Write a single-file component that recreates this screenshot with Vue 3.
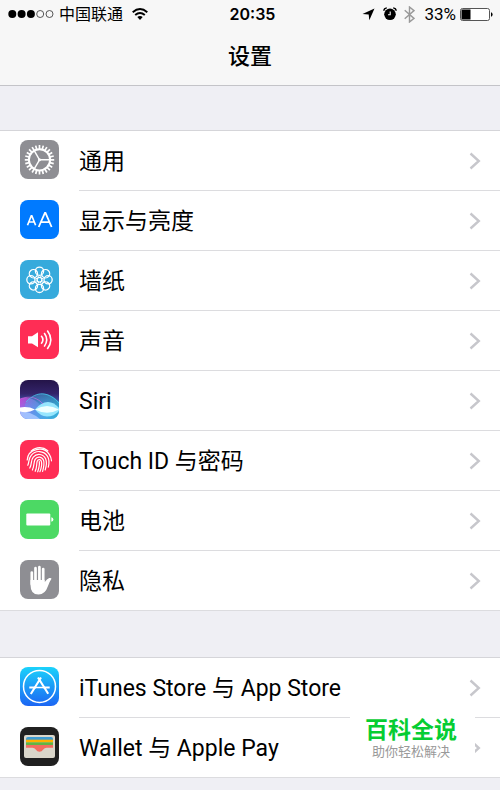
<template>
  <div class="phone">
    <header class="header">
      <div class="status">
        <div class="status-left">
          <svg class="signal" width="46" height="10" viewBox="0 0 46 10">
            <circle
              v-for="n in 5"
              :key="n"
              :cx="n * 9.3 - 5"
              cy="5"
              :r="n < 4 ? 4 : 3.5"
              :fill="n < 4 ? '#000' : 'none'"
              :stroke="n < 4 ? 'none' : '#444'"
              stroke-width="0.9"
            />
          </svg>
          <span class="carrier">中国联通</span>
          <svg width="16" height="12" viewBox="0 0 16 12" fill="none" stroke="#000">
            <path d="M0.7 4.2Q8 -2 15.3 4.2" stroke-width="1.9" />
            <path d="M3.2 7Q8 2.8 12.8 7" stroke-width="1.9" />
            <path d="M5.3 9.1Q8 6.7 10.7 9.1L8 12Z" fill="#000" stroke="none" />
          </svg>
        </div>
        <span class="time">20:35</span>
        <div class="status-right">
          <svg class="arrow" width="13" height="13" viewBox="0 0 13 13">
            <path d="M12.5 0.5L7.3 12.3L6.7 6.5L0.5 6.1Z" />
          </svg>
          <svg class="alarm" width="14" height="14" viewBox="0 0 14 14">
            <circle cx="7" cy="7.3" r="5.8" />
            <path d="M0.8 3.8Q1 1.3 3.8 0.9M13.2 3.8Q13 1.3 10.2 0.9" fill="none" stroke="#000" stroke-width="1.4" />
            <path d="M7.2 4.5V7.7H5" fill="none" stroke="#f7f7f7" stroke-width="1.1" />
          </svg>
          <svg class="bluetooth" width="11" height="17" viewBox="0 0 11 17" fill="none" stroke="#999" stroke-width="1.4">
            <path d="M0.7 4.3L10 12.4L5.5 16V1L10 4.6L0.7 12.7" />
          </svg>
          <span class="percent">33%</span>
          <svg width="33" height="13" viewBox="0 0 33 13">
            <rect x="0.5" y="0.5" width="29" height="12" rx="2" fill="#fff" stroke="#555" />
            <path d="M2 1.5H10.5V11.5H2Q1.5 11.5 1.5 11V2Q1.5 1.5 2 1.5Z" />
            <path d="M31 4.2Q32.6 4.6 32.6 6.5T31 8.8Z" />
          </svg>
        </div>
      </div>
      <h1 class="title">设置</h1>
    </header>

    <main class="content">
      <nav v-for="(group, index) in groups" :key="index" class="group">
        <a v-for="item in group" :key="item.icon" class="row" href="#">
          <svg class="icon" :class="item.icon" viewBox="0 0 39 39" fill="none" stroke="#fff">
            <template v-if="item.icon === 'general'">
              <circle cx="19.5" cy="19.8" r="10.6" stroke-width="2" />
              <path
                v-for="n in 24"
                :key="n"
                d="M19.5 5.1V9"
                stroke-width="1.7"
                :transform="`rotate(${n * 15} 19.5 19.8)`"
              />
              <path
                v-for="n in 3"
                :key="'s' + n"
                d="M19.5 19.8H30"
                stroke-width="1.4"
                :transform="`rotate(${n * 120} 19.5 19.8)`"
              />
              <circle cx="19.5" cy="19.8" r="1.5" fill="#fff" stroke="none" />
            </template>

            <template v-else-if="item.icon === 'display'">
              <path d="M7.5 25.2L11.3 15.8H11.8L15.6 25.2M8.8 22H14.3" stroke-width="1.7" />
              <path d="M18.7 27L24.9 12.8H25.5L31.6 27M20.8 22.2H29.6" stroke-width="1.8" />
            </template>

            <template v-else-if="item.icon === 'wallpaper'">
              <circle
                v-for="n in 8"
                :key="n"
                cx="19.5"
                cy="11.2"
                r="4.1"
                stroke-width="1.3"
                :transform="`rotate(${n * 45} 19.5 19.8)`"
              />
              <path
                v-for="n in 8"
                :key="'p' + n"
                d="M19.5 17.6V15.6"
                stroke-width="1"
                :transform="`rotate(${n * 45 + 22.5} 19.5 19.8)`"
              />
              <circle cx="19.5" cy="19.8" r="2.4" stroke-width="1.2" />
            </template>

            <template v-else-if="item.icon === 'sound'">
              <path d="M8 16.2H12L18 12.3V27.2L12 23.6H8Z" fill="#fff" stroke="none" />
              <path d="M21.2 15.8Q24.6 19.8 21.2 23.8" stroke-width="1.6" />
              <path d="M24.2 13Q29.2 19.8 24.2 26.6" stroke-width="1.6" />
              <path d="M27.3 10.5Q34.3 19.8 27.3 29.1" stroke-width="1.6" />
            </template>

            <template v-else-if="item.icon === 'siri'">
              <defs>
                <linearGradient id="siri-bg" x1="0" y1="0" x2="0" y2="1">
                  <stop offset="0" stop-color="#241448" />
                  <stop offset="0.35" stop-color="#33246a" />
                  <stop offset="0.7" stop-color="#4a76d8" />
                  <stop offset="1" stop-color="#4a9be6" />
                </linearGradient>
                <linearGradient id="siri-pink" x1="0" y1="0" x2="1" y2="0.5">
                  <stop offset="0" stop-color="#d94be0" />
                  <stop offset="1" stop-color="#7b98ff" stop-opacity="0.3" />
                </linearGradient>
                <linearGradient id="siri-teal" x1="0" y1="0" x2="1" y2="0">
                  <stop offset="0" stop-color="#58a5f5" stop-opacity="0.6" />
                  <stop offset="1" stop-color="#28c8d0" />
                </linearGradient>
              </defs>
              <g stroke="none">
                <rect width="39" height="39" fill="url(#siri-bg)" />
                <path d="M0 19C10 15 20 20 29 39H0Z" fill="url(#siri-pink)" opacity="0.85" />
                <path d="M5 24C16 10 28 11 39 22V39H5Z" fill="url(#siri-teal)" opacity="0.6" />
                <path d="M0 31Q10 31 20 39H0Z" fill="#a5c5ff" opacity="0.9" />
                <path d="M15 29.5Q21 22 28 22Q34 22 39 28V31Q34 36.5 27 36.5Q20 36 15 29.5Z" fill="#9beaff" opacity="0.95" />
                <path d="M0 27.5Q8 26 15 29.5Q8 33.5 0 31.5Z" fill="#fff" />
                <path d="M15 29.5Q27 22.5 39 29.5Q27 36 15 29.5Z" fill="#eeffff" />
              </g>
              <path d="M0 19C10 15 18 18 23 24" stroke="#e868ed" stroke-width="0.8" opacity="0.7" />
              <path d="M6 22C17 10 29 12 39 23" stroke="#48ccf0" stroke-width="0.9" opacity="0.8" />
            </template>

            <template v-else-if="item.icon === 'touch'">
              <g stroke-width="1.2" stroke-linecap="round">
                <path d="M11.1 11.2C16.5 6.4 23.2 6.8 27.8 10.8" />
                <path d="M7.2 20C8 8.5 23.5 5.7 29.3 14.3Q31.2 17.2 31.5 20.8" />
                <path d="M7.8 25.3C9.5 21.5 8.2 19 11.2 15.3C15.6 9.8 23.8 10.5 27.4 16.1C29.6 19.6 29.3 23 28.3 27.2" />
                <path d="M9.8 28C12.2 23.5 10.5 20.7 13.3 17.2C17 12.7 23.4 14 25.6 18.8C27.1 22.2 26.4 26 25.2 30" />
                <path d="M12.4 30C14.6 25.4 13.4 22.5 15.1 19.4C17.3 15.8 22.3 16.5 23.6 20.4C24.5 23.4 23.8 27 22.6 31.3" />
                <path d="M15.2 31.3C17.2 27 16.3 24 17.2 21.3C18.2 18.8 21.1 19.2 21.5 21.8C22.1 25 21 29 19.9 31.7" />
                <path d="M19.3 21.5C19.8 25 18.8 28.5 17.7 31.8" />
              </g>
            </template>

            <template v-else-if="item.icon === 'battery'">
              <g fill="#fff" stroke="none">
                <rect x="6.3" y="13.5" width="24" height="12" rx="1" />
                <path d="M31.3 17.3Q33.4 17.6 33.4 19.5T31.3 21.7Z" />
              </g>
            </template>

            <template v-else-if="item.icon === 'privacy'">
              <g stroke-width="2.7" stroke-linecap="round">
                <path d="M11.8 12.5V24M15.5 8.2V22M19.4 7.2V22M23.2 9V24" />
              </g>
              <path
                d="M10.5 20H24.6V22.3Q27 18.8 29.2 18.1Q31.2 17.6 31.5 18.8Q29.6 21.5 28 26Q25.2 34.5 18.5 34.5Q10.5 34.5 10.5 25Z"
                fill="#fff"
                stroke="none"
              />
            </template>

            <template v-else-if="item.icon === 'store'">
              <defs>
                <linearGradient id="store-bg" x1="0" y1="0" x2="0" y2="1">
                  <stop offset="0" stop-color="#1bd2fb" />
                  <stop offset="1" stop-color="#1c65f3" />
                </linearGradient>
              </defs>
              <rect width="39" height="39" fill="url(#store-bg)" stroke="none" />
              <circle cx="19.5" cy="19.4" r="16" stroke-width="1.5" />
              <path d="M18 10.5L28.2 26.8M21 10.5L10.8 27" stroke-width="2.1" />
              <path d="M9.3 20.5H16M23.5 20.5H29.7" stroke-width="2" />
              <path d="M15.5 20.5H24" stroke-width="1.4" />
            </template>

            <template v-else>
              <g stroke="none">
                <rect x="4" y="8" width="31" height="23" rx="2" fill="#dad6ca" />
                <path d="M6 12Q6 10 8 10H31Q33 10 33 12V13H6Z" fill="#3d9bd1" />
                <rect x="6" y="12.7" width="27" height="2.8" fill="#ffb000" />
                <rect x="6" y="15.3" width="27" height="3" fill="#5fb544" />
                <path d="M6 18H33V20.8H26.5Q24.5 20.8 23.3 22.5Q21.8 24.7 19.5 24.7T15.7 22.5Q14.5 20.8 12.5 20.8H6Z" fill="#f26c60" />
              </g>
            </template>
          </svg>
          <span class="label">{{ item.label }}</span>
          <svg class="chevron" width="12" height="18" viewBox="0 0 12 18">
            <path d="M1.5 1.5L9.8 9L1.5 16.5" />
          </svg>
        </a>
      </nav>
      <div class="mark">
        <strong>百科全说</strong>
        <span>助你轻松解决</span>
      </div>
    </main>
  </div>
</template>

<script setup>
const groups = [
  [
    { icon: 'general', label: '通用' },
    { icon: 'display', label: '显示与亮度' },
    { icon: 'wallpaper', label: '墙纸' },
    { icon: 'sound', label: '声音' },
    { icon: 'siri', label: 'Siri' },
    { icon: 'touch', label: 'Touch ID 与密码' },
    { icon: 'battery', label: '电池' },
    { icon: 'privacy', label: '隐私' }
  ],
  [
    { icon: 'store', label: 'iTunes Store 与 App Store' },
    { icon: 'wallet', label: 'Wallet 与 Apple Pay' }
  ]
];
</script>

<style>
body {
  margin: 0;
  background: #efeff4;
}
</style>

<style scoped>
.phone {
  min-height: 100vh;
  background: #efeff4;
  color: #000;
  font-family: Roboto, "Noto Sans CJK SC", sans-serif;
}

.header {
  background: #f7f7f7;
  border-bottom: 1px solid #c4c4c8;
  font-family: Inter, "Noto Sans CJK SC", sans-serif;
}

.status {
  display: grid;
  grid-template-columns: 1fr auto 1fr;
  align-items: center;
  height: 28px;
  padding: 0 7px 0 8px;
  font-size: 16px;
  line-height: 28px;
}

.status-left,
.status-right {
  display: flex;
  align-items: center;
}

.status-right {
  justify-content: flex-end;
}

.carrier {
  margin: 0 9px 0 5px;
}

.time {
  padding-left: 4px;
  font-weight: 600;
}

.alarm {
  margin: 0 7px 0 8px;
}

.percent {
  margin: 0 4px 0 9px;
  font-family: Roboto, sans-serif;
  font-size: 17px;
}

.title {
  margin: 0;
  padding: 12px 0 13px;
  font-size: 22px;
  font-weight: 500;
  line-height: 32px;
  text-align: center;
}

.content {
  position: relative;
  padding-top: 45px;
}

.group {
  margin-bottom: 47px;
  background: #fff;
  box-shadow: 0 -1px #d5d5d9;
}

.group:last-of-type {
  margin-bottom: 0;
}

.row {
  display: flex;
  align-items: center;
  box-sizing: border-box;
  height: 60px;
  padding: 0 19px 0 20px;
  background: linear-gradient(#dcdcdf, #dcdcdf) 79px 100% / 100% 1px no-repeat;
  color: inherit;
  text-decoration: none;
}

.row:last-child {
  background-position: 0 100%;
}

.icon {
  flex: none;
  align-self: flex-start;
  width: 39px;
  height: 39px;
  margin: 9px 20px 0 0;
  border-radius: 8px;
}

.label {
  padding-top: 2px;
  font-size: 23px;
  line-height: 32px;
}

.chevron {
  margin-left: auto;
  fill: none;
  stroke: #c7c7cc;
  stroke-width: 2.4;
}

.general,
.privacy {
  background: #8e8e93;
}

.display {
  background: #007aff;
}

.wallpaper {
  background: #36aadc;
}

.sound,
.touch {
  background: #ff2d55;
}

.battery {
  background: #4cd964;
}

.wallet {
  background: #202020;
}

/* 右下角水印 */
.mark {
  position: absolute;
  right: 25px;
  bottom: 1px;
  display: flex;
  flex-direction: column;
  align-items: center;
  box-sizing: border-box;
  width: 125px;
  height: 64px;
  padding: 5px 3px 0 0;
  background: #fff;
}

.mark strong {
  color: #06cd32;
  font-size: 23px;
  font-weight: 700;
  line-height: 26px;
}

.mark span {
  color: #999;
  font-size: 13px;
  line-height: 16px;
}
</style>
